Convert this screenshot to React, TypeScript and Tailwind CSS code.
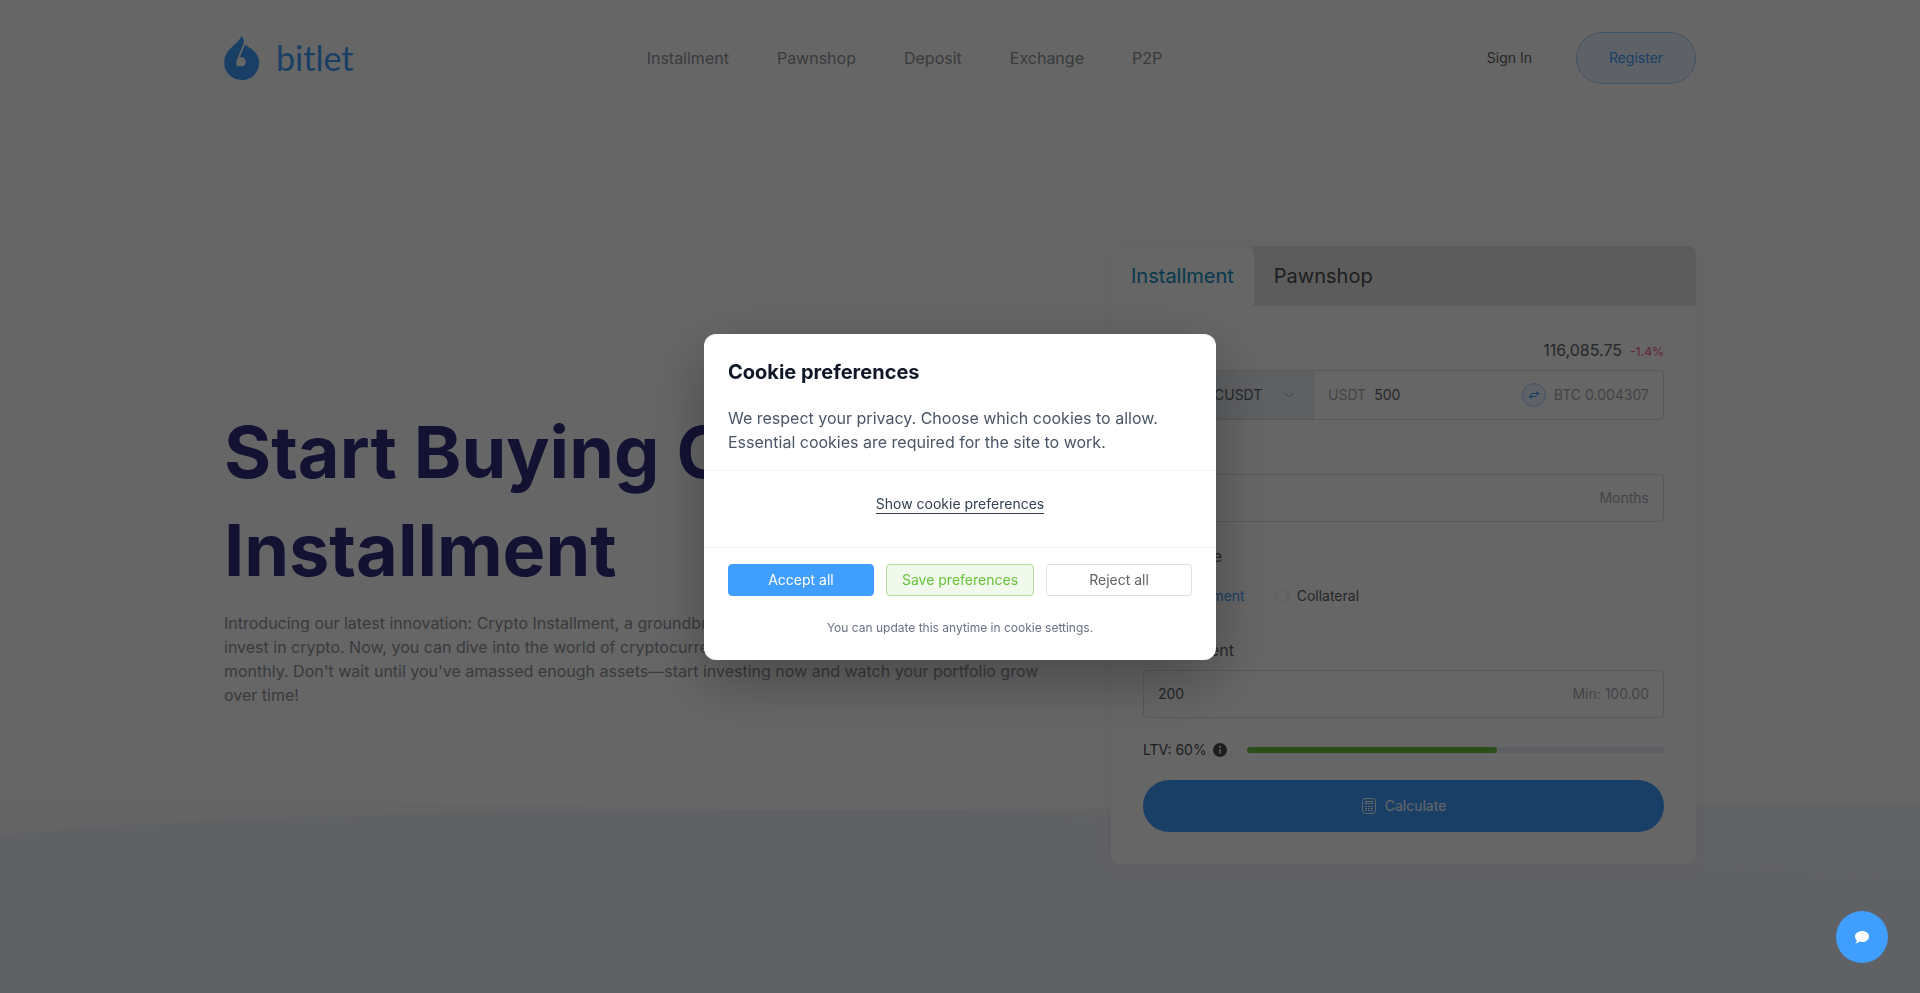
import React, { useState } from 'react';
import { ChevronDown } from 'lucide-react';

const NAV_LINKS = ['Installment', 'Pawnshop', 'Deposit', 'Exchange', 'P2P'];

const PAYMENT_TYPES = ['Prepayment', 'Collateral'];

const Logo: React.FC = () => (
  <a href="#" aria-label="bitlet" className="flex h-11 w-[130px] items-center gap-4 text-[#409eff]">
    <svg viewBox="0 0 36 44" className="h-11 w-9 shrink-0" fill="currentColor" aria-hidden="true">
      <path
        fillRule="evenodd"
        d="M17.2 0C19.6 2 20.5 4.6 19.4 7.8L14 21.4C12.4 24 12 27 13 30.2H18.5C23 29.8 22.8 21.4 17.6 21L15.8 21.6L21 8.4C27.6 12.6 35.2 17.6 35.2 26.6C35.2 36.6 27.6 44 17.8 44C8 44 .2 36.6 .2 26.8C.2 17.6 5.4 13.6 10.6 8.6C13.6 5.8 16.2 3.4 17.2 0Z"
      />
    </svg>
    <span className="font-['Lato',sans-serif] text-[34px] leading-10">bitlet</span>
  </a>
);

const Header: React.FC = () => (
  <header className="mx-auto flex w-full max-w-[1536px] items-center justify-between px-8 py-8">
    <Logo />
    <nav className="flex gap-12">
      {NAV_LINKS.map((link) => (
        <a key={link} href="#" className="text-base text-[#909399]">
          {link}
        </a>
      ))}
    </nav>
    <div className="flex gap-3 text-sm">
      <button type="button" className="h-[52px] rounded-full px-8 text-[#606266]">
        Sign In
      </button>
      <button
        type="button"
        className="h-[52px] w-[120px] rounded-full border border-[#a0cfff] bg-[#ecf5ff] text-[#409eff]"
      >
        Register
      </button>
    </div>
  </header>
);

const Waves: React.FC = () => (
  <svg
    className="absolute inset-x-0 bottom-0 h-[200px] w-full"
    viewBox="0 0 1920 200"
    preserveAspectRatio="none"
    aria-hidden="true"
  >
    <path fill="#fafbfd" d="M0 6C300 6 500 9 800 16C1200 18 1500 10 1920 10V200H0Z" />
    <path fill="#f3f5fb" d="M0 40C200 22 420 16 800 16C1200 16 1500 10 1920 10V200H0Z" />
    <path fill="#f0f2f9" d="M0 42C200 24 420 18 800 16C1200 16 1500 60 1920 86V200H0Z" />
  </svg>
);

const Calculator: React.FC = () => {
  const [paymentType, setPaymentType] = useState('Prepayment');
  const ltv = 60;

  return (
    <form className="w-[585px] shrink-0 rounded-lg bg-white shadow-[0_0_16px_rgba(0,0,0,0.05)]">
      <div className="flex h-[60px] rounded-t-lg bg-[#e6e6e6] text-xl">
        <button type="button" className="rounded-t-lg bg-white px-5 text-[#0e8ec4]">
          Installment
        </button>
        <button type="button" className="px-5 text-[#4c4d4f]">
          Pawnshop
        </button>
      </div>

      <div className="p-8 text-sm text-[#606266]">
        <div className="mb-2 flex items-baseline justify-end gap-2">
          <span className="text-base">116,085.75</span>
          <span className="text-xs font-medium text-[#f56c8c]">-1.4%</span>
        </div>
        <div className="mb-[22px] flex h-[50px] rounded border border-[#dcdfe6]">
          <div className="flex w-[170px] items-center justify-end border-r border-[#dcdfe6] bg-[#ebf0f5] pr-4">
            <select aria-label="Pair" className="w-[84px] appearance-none bg-transparent">
              <option>BTCUSDT</option>
            </select>
            <ChevronDown className="h-4 w-4 text-[#a8abb2]" strokeWidth={1.5} />
          </div>
          <div className="flex flex-1 items-center px-[14px]">
            <label htmlFor="amount" className="mr-2 text-[#a8abb2]">
              USDT
            </label>
            <input id="amount" defaultValue="500" className="w-0 flex-1" />
            <button
              type="button"
              aria-label="Swap currency"
              className="mr-2 flex h-6 w-6 items-center justify-center rounded-full border border-[#a0cfff] bg-[#ecf5ff] text-[#409eff]"
            >
              <svg viewBox="0 0 12 12" className="h-3 w-3" aria-hidden="true">
                <path d="M3.5 4.5H9M8.5 7.5H3" fill="none" stroke="currentColor" strokeWidth="1.2" />
                <path d="M8.5 2L11.5 4.5L8.5 7ZM3.5 5L.5 7.5L3.5 10Z" fill="currentColor" />
              </svg>
            </button>
            <span className="text-[#a8abb2]">BTC 0.004307</span>
          </div>
        </div>

        <label htmlFor="term" className="mb-2 block text-base">
          Period
        </label>
        <div className="mb-[22px] flex h-12 items-center rounded border border-[#dcdfe6] px-[14px]">
          <input id="term" defaultValue="12" className="w-0 flex-1" />
          <span className="text-[#a8abb2]">Months</span>
        </div>

        <fieldset className="mb-[22px]">
          <legend className="mb-2 text-base">Loan Type</legend>
          <div className="flex h-10 items-center gap-[30px]">
            {PAYMENT_TYPES.map((type) => (
              <label
                key={type}
                className={`flex items-center gap-2 ${paymentType === type ? 'text-[#409eff]' : ''}`}
              >
                <input
                  type="radio"
                  name="paymentType"
                  checked={paymentType === type}
                  onChange={() => setPaymentType(type)}
                  className="h-[14px] w-[14px] appearance-none rounded-full border border-[#e4e7ed] checked:border-4 checked:border-[#409eff]"
                />
                {type}
              </label>
            ))}
          </div>
        </fieldset>

        <label htmlFor="payment" className="mb-2 block text-base">
          Prepayment
        </label>
        <div className="mb-[22px] flex h-12 items-center rounded border border-[#dcdfe6] px-[14px]">
          <input id="payment" defaultValue="200" className="w-0 flex-1" />
          <span className="text-[#a8abb2]">Min: 100.00</span>
        </div>

        <div className="mb-5 flex h-5 items-center text-[#4c4d4f]">
          <span>LTV: {ltv}%</span>
          <svg viewBox="0 0 14 14" className="mr-5 ml-[6px] h-[14px] w-[14px]" aria-hidden="true">
            <circle cx="7" cy="7" r="7" fill="#4c4d4f" />
            <circle cx="7" cy="4" r="1" fill="#fff" />
            <path d="M7 6v4.5" fill="none" stroke="#fff" strokeWidth="1.4" />
          </svg>
          <div className="h-[6px] flex-1 rounded-full bg-[#ebeef5]">
            <div className="h-[6px] rounded-full bg-[#67c23a]" style={{ width: `${ltv}%` }} />
          </div>
        </div>

        <button
          type="button"
          className="flex h-[52px] w-full items-center justify-center gap-2 rounded-full bg-[#409eff] text-white"
        >
          <svg viewBox="0 0 16 16" className="h-4 w-4" fill="none" stroke="currentColor" aria-hidden="true">
            <rect x="1.5" y="0.5" width="13" height="15" rx="3" />
            <rect x="4.5" y="3.5" width="7" height="2" />
            <path d="M4 8.5h2M7 8.5h2M10 8.5h2M4 10.5h2M7 10.5h2M10 10.5h2M4 12.5h2M7 12.5h2M10 12.5h2" />
          </svg>
          Calculate
        </button>
      </div>
    </form>
  );
};

const CookieDialog: React.FC = () => (
  <div className="fixed inset-0 z-20 flex items-center justify-center bg-black/60">
    <div
      role="dialog"
      aria-labelledby="cookie-title"
      className="w-[512px] rounded-xl bg-white shadow-[0_20px_60px_rgba(0,0,0,0.3)]"
    >
      <div className="border-b border-gray-100 px-6 pt-6 pb-4">
        <h2 id="cookie-title" className="mb-5 text-xl font-bold text-gray-900">
          Cookie preferences
        </h2>
        <p className="text-base text-gray-600">
          We respect your privacy. Choose which cookies to allow. Essential cookies are required for the site to work.
        </p>
      </div>
      <div className="flex justify-center pt-6 pb-[33px]">
        <button type="button" className="border-b border-gray-700 text-sm leading-[18px] text-gray-700">
          Show cookie preferences
        </button>
      </div>
      <div className="border-t border-gray-100 px-6 pt-4 pb-6">
        <div className="flex gap-3 text-sm">
          <button
            type="button"
            className="h-8 flex-1 rounded border border-[#409eff] bg-[#409eff] px-[15px] text-white"
          >
            Accept all
          </button>
          <button
            type="button"
            className="h-8 flex-1 rounded border border-[#b3e19d] bg-[#f0f9eb] px-[15px] whitespace-nowrap text-[#67c23a]"
          >
            Save preferences
          </button>
          <button type="button" className="h-8 flex-1 rounded border border-[#dcdfe6] px-[15px] text-[#606266]">
            Reject all
          </button>
        </div>
        <p className="mt-6 text-center text-xs text-gray-500">You can update this anytime in cookie settings.</p>
      </div>
    </div>
  </div>
);

const App: React.FC = () => (
  <div className="relative min-h-screen overflow-hidden bg-white font-['Inter',sans-serif]">
    <Waves />
    <div className="relative">
      <Header />
      <main className="mx-auto flex w-full max-w-[1536px] items-center gap-14 px-8 py-[130px]">
        <section className="flex-1">
          <h1 className="mb-3 text-7xl leading-[98px] font-bold text-[#312e81]">Start Buying Crypto in Installment</h1>
          <p className="text-base text-[#909399]">
            Introducing our latest innovation: Crypto Installment, a groundbreaking new and simple way for everyone to
            invest in crypto. Now, you can dive into the world of cryptocurrency and pay for all of your purchases
            monthly. Don't wait until you've amassed enough assets—start investing now and watch your portfolio grow
            over time!
          </p>
        </section>
        <Calculator />
      </main>
    </div>

    <CookieDialog />

    <button
      type="button"
      aria-label="Open chat"
      className="fixed right-8 bottom-[30px] z-30 flex h-[52px] w-[52px] items-center justify-center rounded-full bg-[#409eff] text-white"
    >
      <svg viewBox="0 0 14 14" className="h-[14px] w-[14px]" fill="currentColor" aria-hidden="true">
        <path d="M7.2 1C11 1 14 3.4 14 6.4S11 12 7.2 12C6.2 12 5.2 11.9 4.4 11.6C3.4 12.8 2 13.4.4 13.4C1.3 12.6 1.8 11.6 1.8 10.4C.7 9.4 0 8 0 6.5C0 3.4 3.4 1 7.2 1Z" />
      </svg>
    </button>
  </div>
);

export default App;
